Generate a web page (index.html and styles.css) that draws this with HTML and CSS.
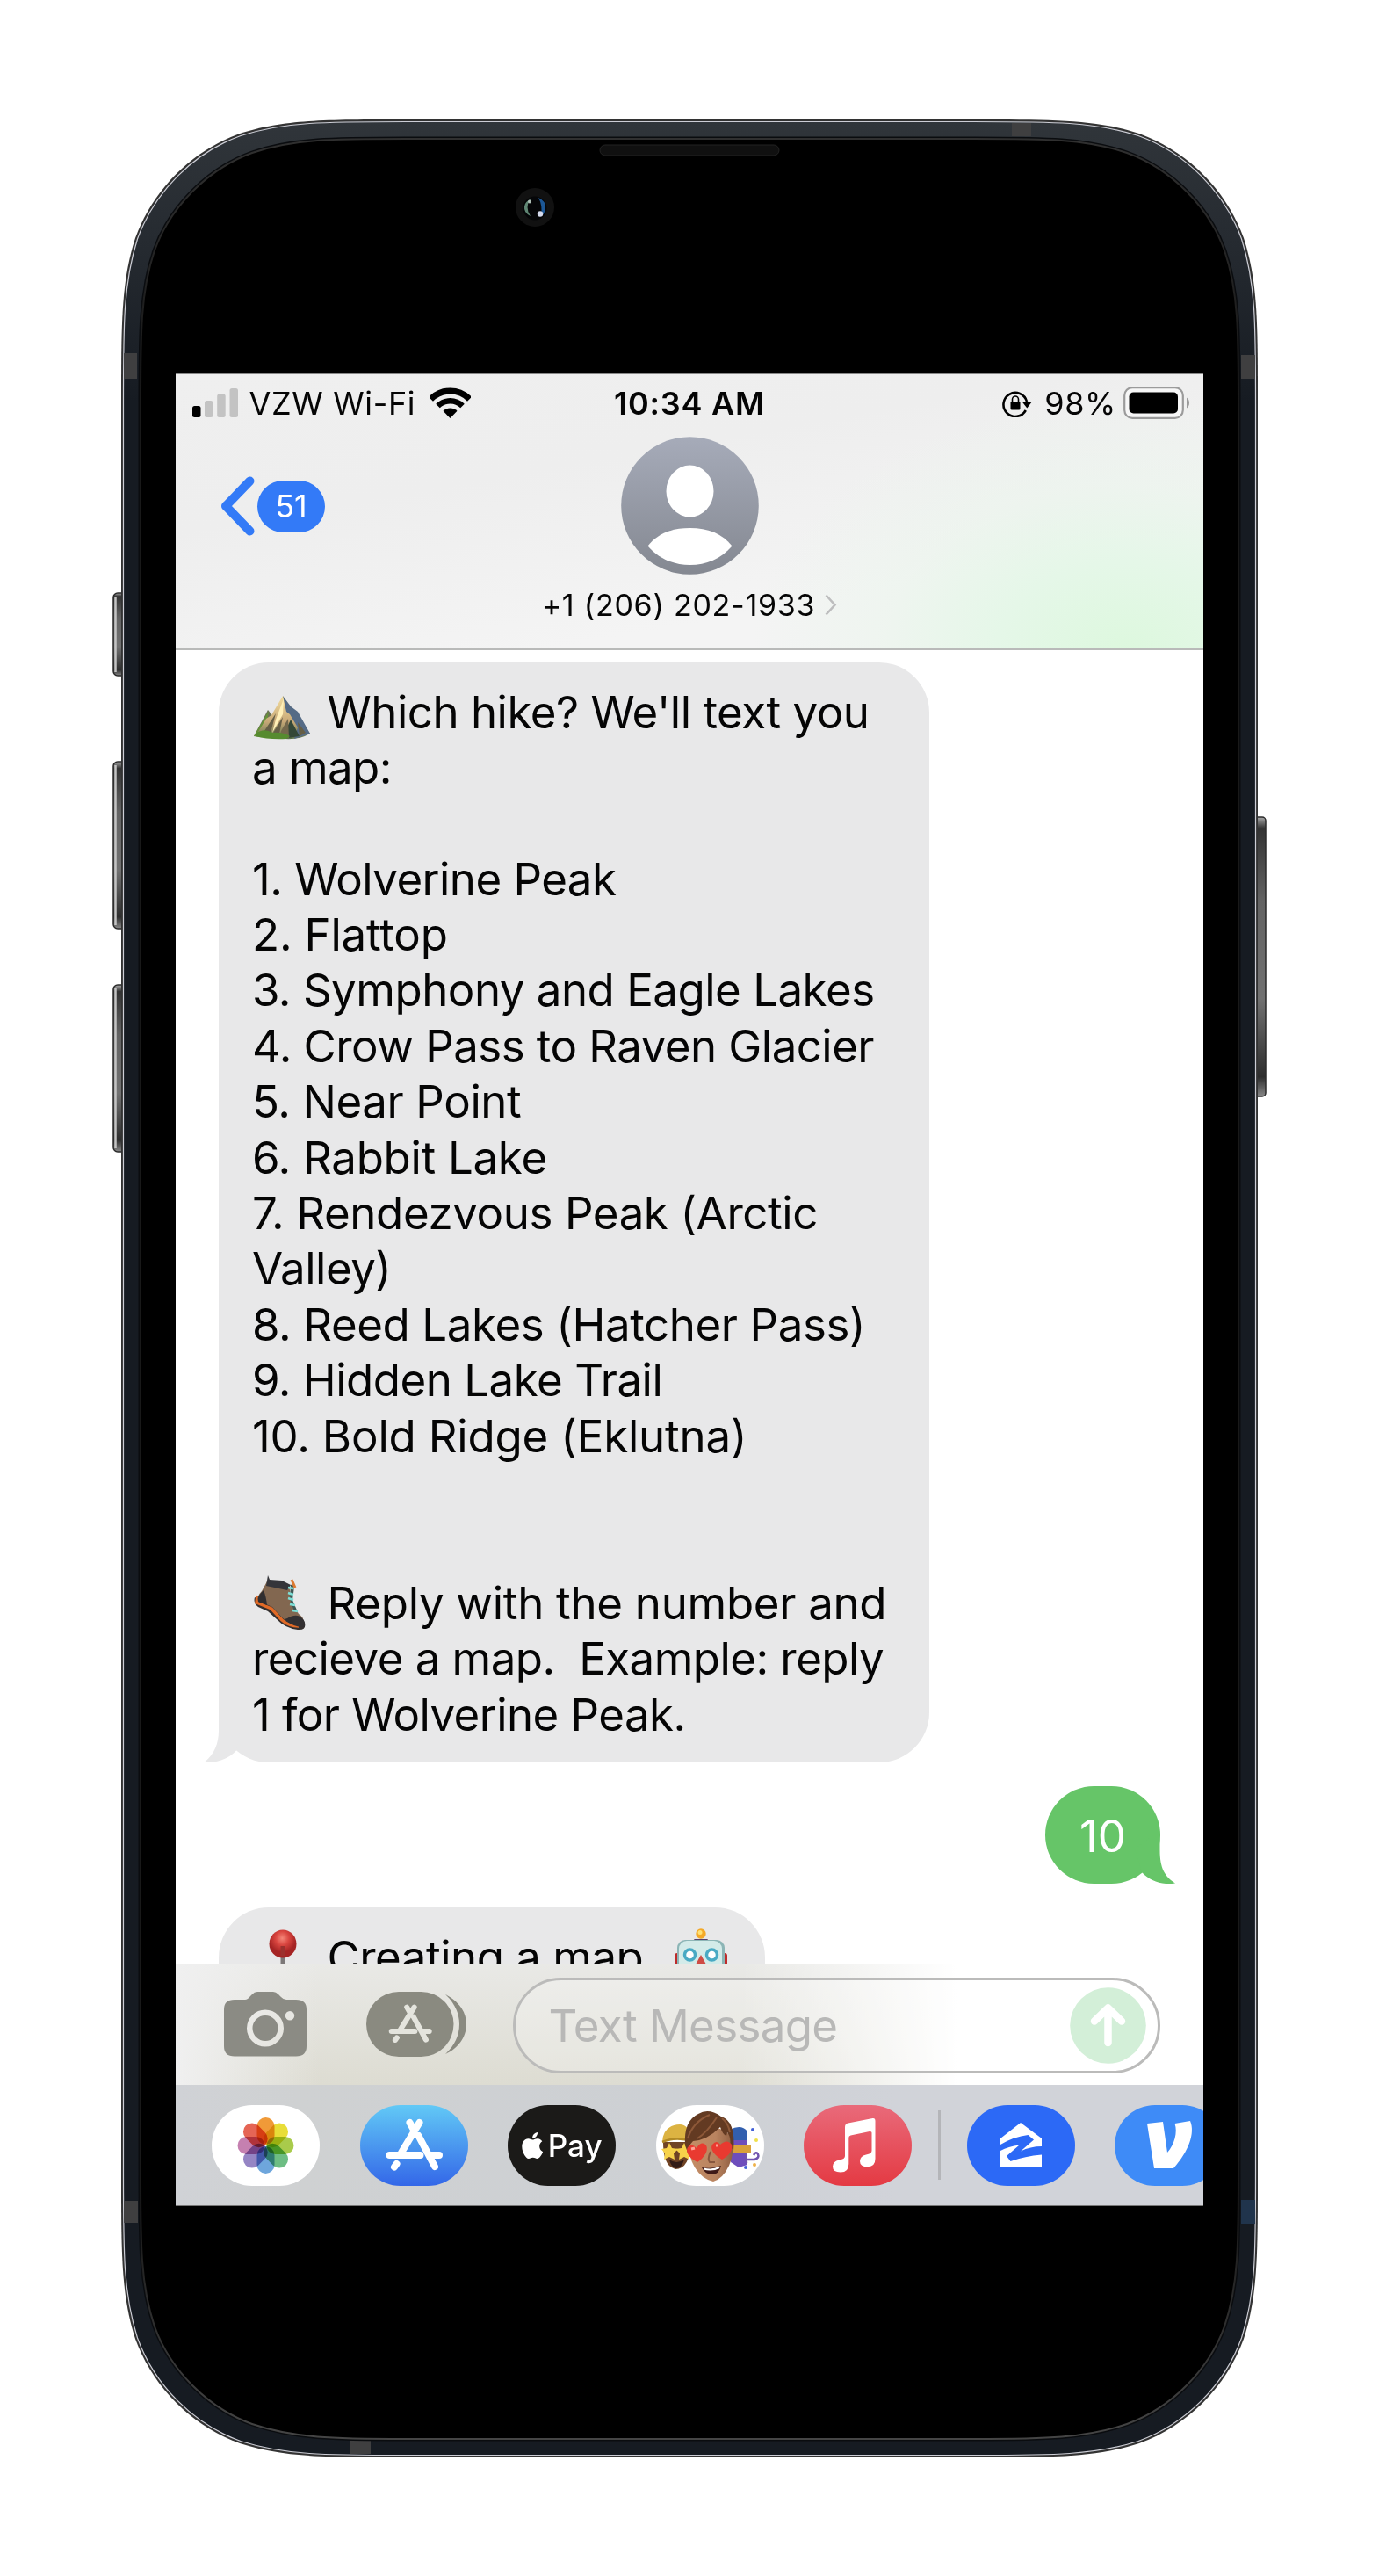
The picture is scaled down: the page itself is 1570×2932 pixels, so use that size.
FILE: index.html
```html
<!DOCTYPE html>
<html lang="en">
<head>
<meta charset="utf-8">
<title>Messages</title>
<link rel="stylesheet" href="styles.css">
</head>
<body>
<main class="device">
  <svg class="chassis" viewBox="0 0 1570 2932" aria-hidden="true">
    <defs>
      <linearGradient id="metal" x1="0" y1="0" x2="0" y2="1"><stop offset="0" stop-color="#30353a"/><stop offset=".05" stop-color="#262b31"/><stop offset=".12" stop-color="#161b22"/><stop offset="1" stop-color="#161b22"/></linearGradient>
      <linearGradient id="key" x1="0" y1="0" x2="0" y2="1"><stop offset="0" stop-color="#aaa"/><stop offset=".04" stop-color="#333"/><stop offset=".3" stop-color="#636363"/><stop offset=".65" stop-color="#717171"/><stop offset=".93" stop-color="#2d2d2d"/><stop offset="1" stop-color="#888"/></linearGradient>
      <linearGradient id="rim" x1="0" y1="0" x2="0" y2="1"><stop offset="0" stop-color="#303030"/><stop offset=".1" stop-color="#191919"/><stop offset=".9" stop-color="#191919"/><stop offset="1" stop-color="#454545"/></linearGradient>
    </defs>
    <g fill="url(#key)" stroke="#2b2b2b" stroke-width="1.5">
      <rect x="129" y="675" width="18" height="94" rx="5"/><rect x="129" y="867" width="18" height="190" rx="5"/><rect x="129" y="1121" width="18" height="190" rx="5"/><rect x="1424" y="930" width="17" height="318" rx="4"/>
    </g>
    <path d="M131.500 679v86M131.500 871v182M131.500 1125v182" stroke="#c4c4c4" stroke-width="2.500"/>
    <path fill="#333" d="M462 136H1108C1201 136 1247 136 1297 152C1352 172 1396 216 1416 271C1432 321 1432 367 1432 460V2473C1432 2566 1432 2612 1416 2662C1396 2717 1352 2761 1297 2781C1247 2797 1201 2797 1108 2797H462C369 2797 323 2797 273 2781C218 2761 174 2717 154 2662C138 2612 138 2566 138 2473V460C138 367 138 321 154 271C174 216 218 172 273 152C323 136 369 136 462 136Z"/>
    <path fill="url(#metal)" stroke="#cdced6" stroke-width="1.2" d="M462 138.500H1108C1200 138.500 1246 138.500 1296 154.500C1350 174 1394 218 1413.500 272C1429.500 322 1429.500 368 1429.500 460V2473C1429.500 2565 1429.500 2611 1413.500 2661C1394 2715 1350 2759 1296 2778.500C1246 2794.500 1200 2794.500 1108 2794.500H462C370 2794.500 324 2794.500 274 2778.500C220 2759 176 2715 156.500 2661C140.500 2611 140.500 2565 140.500 2473V460C140.500 368 140.500 322 156.500 272C176 218 220 174 274 154.500C324 138.500 370 138.500 462 138.500Z"/>
    <g fill="#3f3f40"><path d="M141 402h15v29h-15zM1413 404h16v27h-16zM1152 140h22v15h-22zM141 2505h16v25h-16zM398 2777h24v16h-24z"/><path fill="#20344c" d="M1413 2504h16v27h-16z"/></g>
    <path fill="#000" stroke="#0a0c0f" stroke-width="5" d="M462 158H1108C1190 158 1236 158 1283 174C1333 192 1376 235 1394 285C1410 332 1410 378 1410 460V2473C1410 2555 1410 2601 1394 2648C1376 2698 1333 2741 1283 2759C1236 2775 1190 2776 1108 2776H462C380 2776 334 2775 287 2759C237 2741 194 2698 176 2648C160 2601 160 2555 160 2473V460C160 378 160 332 176 285C194 235 237 192 287 174C334 158 380 158 462 158Z"/>
    <path fill="#000" stroke="url(#rim)" stroke-width="2" d="M462 158H1108C1190 158 1236 158 1283 174C1333 192 1376 235 1394 285C1410 332 1410 378 1410 460V2473C1410 2555 1410 2601 1394 2648C1376 2698 1333 2741 1283 2759C1236 2775 1190 2776 1108 2776H462C380 2776 334 2775 287 2759C237 2741 194 2698 176 2648C160 2601 160 2555 160 2473V460C160 378 160 332 176 285C194 235 237 192 287 174C334 158 380 158 462 158Z"/>
    <rect x="683" y="165" width="204" height="12" rx="6" fill="#101010" stroke="#222"/>
    <circle cx="609" cy="236" r="22" fill="#111"/><circle cx="609" cy="237" r="13.500" fill="#050608"/>
    <path d="M604 227q-7 9 0 19q-8-4-7-11q1-6 7-8z" fill="#5f8673"/><path d="M613 225q9 4 8 12q-1 7-5 9q2-12-3-21z" fill="#1c5796"/><circle cx="615" cy="243.500" r="3.200" fill="#d5dbee"/><circle cx="603" cy="229.500" r="2" fill="#aebfb6"/>
  </svg>

  <section class="screen">
    <header class="top">
      <div class="status">
        <div class="carrier">
          <svg width="52" height="33" viewBox="0 0 52 33"><g fill="#c3c3c3"><rect x="14" y="14" width="9.500" height="19" rx="2.500"/><rect x="28.200" y="6.500" width="9.500" height="26.500" rx="2.500"/><rect x="42.500" width="9.500" height="33" rx="2.500"/></g><rect y="20" width="9.500" height="13" rx="2.500"/></svg>
          <span class="net">VZW Wi-Fi</span>
          <svg width="47" height="35" viewBox="0 0 47 35"><g fill="none" stroke="#000"><path d="M1.500 13.200A31 31 0 0 1 45.500 13.200" stroke-width="7"/><path d="M9.500 21A20 20 0 0 1 37.500 21" stroke-width="6.500"/></g><path d="M23.500 35L15.500 26.800A11.500 11.500 0 0 1 31.500 26.800Z"/></svg>
        </div>
        <div class="clock">10:34 AM</div>
        <div class="power">
          <svg width="34" height="32" viewBox="0 0 34 32"><path d="M26.800 24A13.500 13.500 0 1 1 28 14" fill="none" stroke="#000" stroke-width="2.600"/><path d="M22.500 14H34L28.300 21.500Z"/><rect x="9.500" y="14" width="11" height="9.500" rx="1.500"/><path d="M11.500 15v-3.500a3.500 3.500 0 0 1 7 0V15" fill="none" stroke="#000" stroke-width="1.600"/></svg>
          <span class="pct">98%</span>
          <svg width="76" height="37" viewBox="0 0 76 37"><rect x="1.200" y="1.200" width="66.600" height="34.600" rx="9" fill="#f7f7f7" stroke="#9b9b9b" stroke-width="2.200"/><rect x="6.500" y="6.500" width="55.500" height="24" rx="5"/><path d="M72 12.500q3 2 3 6t-3 6z" fill="#9b9b9b"/></svg>
        </div>
      </div>
      <div class="contact-row">
        <div class="back">
          <svg width="39" height="68" viewBox="0 0 39 68"><path d="M33.500 5.500L6 34L33.500 62.500" fill="none" stroke="#337af7" stroke-width="10" stroke-linecap="round" stroke-linejoin="round"/></svg>
          <span class="badge">51</span>
        </div>
        <div class="contact">
          <svg width="157" height="157" viewBox="0 0 157 157"><defs><linearGradient id="av" x1="0" y1="0" x2="0" y2="1"><stop offset="0" stop-color="#a6abb9"/><stop offset="1" stop-color="#848891"/></linearGradient></defs><circle cx="78.500" cy="78.500" r="78.300" fill="url(#av)"/><ellipse cx="78.500" cy="62" rx="27" ry="29.500" fill="#fff"/><path d="M30.500 124.500C42 110 58 104 78.500 104S115 110 126.500 124.500C114 139 97 146 78.500 146S43 139 30.500 124.500Z" fill="#fff"/></svg>
          <div class="number"><span class="tel">+1 (206) 202-1933</span><svg width="14" height="25" viewBox="0 0 14 25"><path d="M1.500 1.500L11.500 12.500L1.500 23.500" fill="none" stroke="#bdbdbe" stroke-width="2.600"/></svg></div>
        </div>
      </div>
    </header>

    <div class="thread">
      <article class="bubble received hikes">
        <svg class="tail" width="44" height="58" viewBox="0 0 44 58"><path d="M16 0V22C16 36 11 49 0 57.500C14 59 27 54 36 44.500L44 0Z" fill="#e8e8e9"/></svg>
        <p class="t50"><svg class="emoji" width="65" height="50" viewBox="0 0 65 50"><defs><linearGradient id="rock" x1="0" y1="0" x2="0" y2="1"><stop offset="0" stop-color="#f5dfa0"/><stop offset=".6" stop-color="#c7a877"/><stop offset="1" stop-color="#59714a"/></linearGradient></defs><path d="M0 46L16 16L24 26L21 48Z" fill="#6d7257"/><path d="M0 46L17 17L12 47Z" fill="#66923a"/><path d="M2 46L14 26L20 22L33 0L42 12L55 30L64 43Q47 53 22 47Z" fill="url(#rock)"/><path d="M33 0L42 12L50 18L64 43L46 49L50 36L41 21L37 18Z" fill="#556b86"/><path d="M42 27L52 46L32 49Z" fill="#344737"/><path d="M19 47L33 24L28 48ZM8 46L25 20L18 46ZM50 30L59 42L52 46Z" fill="#655e46"/><path d="M34 3L25 27L21 42L33 21Z" fill="#fff0b8"/><path d="M40 48L39 26L31 40L29 48Z" fill="#74684c"/><path d="M2 43Q12 36 21 42Q33 41 41 46L37 49Q16 50 2 46Z" fill="#568b2f"/></svg>Which hike? We'll text you</p>
        <p class="t55">a map:</p>
        <p></p>
        <p class="t55">1. Wolverine Peak</p>
        <p class="t20">2. Flattop</p>
        <p class="t50">3. Symphony and Eagle Lakes</p>
        <p class="t55">4. Crow Pass to Raven Glacier</p>
        <p class="t40">5. Near Point</p>
        <p class="t30">6. Rabbit Lake</p>
        <p class="t40">7. Rendezvous Peak (Arctic</p>
        <p class="t50">Valley)</p>
        <p class="t40">8. Reed Lakes (Hatcher Pass)</p>
        <p class="t50">9. Hidden Lake Trail</p>
        <p class="t20">10. Bold Ridge (Eklutna)</p>
        <p></p>
        <p></p>
        <p class="t30"><svg class="emoji" width="65" height="64" viewBox="0 0 65 64"><path d="M1 26Q-1 33 5 37L16 42L26 51Q35 61 50 63Q60 64 58 55L55 49Z" fill="#35302f"/><path d="M4 24L3 32L20 39L32 52Q40 59 51 59" fill="none" stroke="#e06a27" stroke-width="3.500"/><path d="M15 8L39 11Q42 18 42 29L51 45Q58 49 56 57Q43 58 33 50L21 37L5 30Q3 25 9 19Z" fill="#826750"/><path d="M16 1L18 6L32 7L42 12L38 18L14 13Z" fill="#35353a"/><path d="M11 18Q3 25 5 31L15 35Q14 25 11 18Z" fill="#302e30"/><path d="M38 50Q48 44 54 49Q60 54 57 60Q44 60 35 51Z" fill="#333032"/><path d="M42 12Q46 10 45.500 18L44 29L50 43L46 42L41 28Z" fill="#3f5653"/><path d="M39 15l6 1M39 21l6 2M39 27l6 2M41 34l6 1M44 41l6 1" stroke="#7dded6" stroke-width="2.600"/><path d="M43 6l4 9" stroke="#dc7930" stroke-width="3"/></svg>Reply with the number and</p>
        <p class="t55">recieve a map.&nbsp; Example: reply</p>
        <p class="t55">1 for Wolverine Peak.</p>
      </article>

      <article class="bubble sent">
        <svg class="tail" width="46" height="60" viewBox="0 0 46 60"><path d="M28.500 0V22C28.500 42 34 52 46 59.500C32 62 17 57 8 47L0 20Z" fill="#66c568"/></svg>
        10
      </article>

      <article class="bubble received creating">
        <p class="t50"><svg class="emoji" width="65" height="64" viewBox="0 0 65 64"><defs><radialGradient id="pin" cx=".48" cy=".3"><stop offset="0" stop-color="#f58678"/><stop offset=".5" stop-color="#d9453f"/><stop offset="1" stop-color="#a52424"/></radialGradient></defs><path d="M33 28V62" stroke="#7c7878" stroke-width="5"/><ellipse cx="33" cy="17.500" rx="15.500" ry="16" fill="url(#pin)"/><path d="M33 20v11" stroke="#9c302d" stroke-width="5"/></svg>Creating a map<svg class="emoji robot" width="60" height="64" viewBox="0 0 60 64"><rect x="0" y="28" width="8" height="22" rx="3" fill="#bd2b2b"/><rect x="52" y="28" width="8" height="22" rx="3" fill="#bd2b2b"/><path d="M22 12h16l-3 5H25z" fill="#57406c"/><circle cx="30" cy="6" r="5.700" fill="#f4a928"/><circle cx="29" cy="4.500" r="2.500" fill="#ffe175"/><rect x="3" y="13" width="54" height="48" rx="9" fill="#8cb5b6"/><rect x="5" y="14" width="49" height="40" rx="9" fill="#d3ebe9"/><g fill="#fff" stroke="#49aac4" stroke-width="3.500"><circle cx="17.500" cy="30" r="6"/><circle cx="42.500" cy="30" r="6"/></g><path d="M30 30l6 11H24z" fill="#cf4b45"/><rect x="14" y="46" width="32" height="9" fill="#355"/></svg></p>
      </article>
    </div>

    <div class="composer">
      <svg class="camera" width="94" height="74" viewBox="0 0 94 74"><path fill="#8b8b84" fill-rule="evenodd" d="M12 9H24Q27 9 30 5L32 3Q34.500 0 38 0H56Q59 0 62 3L65 6Q67.500 9 71 9H82Q94 9 94 20V62Q94 73.500 82 73.500H12Q0 73.500 0 62V20Q0 9 12 9ZM47 20.500A21 21 0 1 0 47 62.500A21 21 0 1 0 47 20.500ZM47 27A14.500 14.500 0 1 1 47 56A14.500 14.500 0 1 1 47 27ZM75 22A5.200 5.200 0 1 0 75 32.400A5.200 5.200 0 1 0 75 22Z"/></svg>
      <svg class="apps" width="116" height="74" viewBox="0 0 116 74"><rect width="99.500" height="74" rx="37" fill="#8a8a80"/><path d="M90 3C104 10 114 22 114 37S104 65 90 71C100 62 106 50 106 37S100 12 90 3Z" fill="#8a8a80"/><g transform="translate(3.300 2.800) scale(.76 .74)" fill="none" stroke="#e4e4dd" stroke-width="8" stroke-linecap="round"><path d="M56.500 20L61 28M67.500 20L47 54M66.500 35L85 70M33.500 57H68.500M80 57H90M41.500 67L39 70.500"/></g></svg>
      <div class="field"><span class="ph">Text Message</span>
        <svg class="send" width="87" height="87" viewBox="0 0 87 87"><circle cx="43.500" cy="43.500" r="43.300" fill="#d3efd8"/><path d="M43.500 63V26M28 38.500L43.500 23.500L59 38.500" fill="none" stroke="#fff" stroke-width="8.500" stroke-linecap="round" stroke-linejoin="round"/></svg>
      </div>
    </div>

    <nav class="drawer">
      <svg class="app" viewBox="0 0 123 92"><rect width="123" height="92" rx="46" fill="#fff"/><g class="petals"><rect x="51.500" y="14" width="20" height="31" rx="10" fill="#f09a38"/><rect x="51.500" y="14" width="20" height="31" rx="10" fill="#e8dd38" transform="rotate(45 61.500 46)"/><rect x="51.500" y="14" width="20" height="31" rx="10" fill="#a9cb4b" transform="rotate(90 61.500 46)"/><rect x="51.500" y="14" width="20" height="31" rx="10" fill="#6dbd83" transform="rotate(135 61.500 46)"/><rect x="51.500" y="14" width="20" height="31" rx="10" fill="#6ea6dc" transform="rotate(180 61.500 46)"/><rect x="51.500" y="14" width="20" height="31" rx="10" fill="#9585c4" transform="rotate(225 61.500 46)"/><rect x="51.500" y="14" width="20" height="31" rx="10" fill="#c580b0" transform="rotate(270 61.500 46)"/><rect x="51.500" y="14" width="20" height="31" rx="10" fill="#e56555" transform="rotate(315 61.500 46)"/></g></svg>
      <svg class="app" viewBox="0 0 123 92"><defs><linearGradient id="as" x1="0" y1="0" x2="0" y2="1"><stop offset="0" stop-color="#62c9f6"/><stop offset="1" stop-color="#3467e8"/></linearGradient></defs><rect width="123" height="92" rx="46" fill="url(#as)"/><path d="M56.500 20L61 28M67.500 20L47 54M66.500 35L85 70M33.500 57H68.500M80 57H90M41.500 67L39 70.500" fill="none" stroke="#fff" stroke-width="8" stroke-linecap="round"/></svg>
      <div class="app pay"><svg width="25" height="30" viewBox="2 0 20.500 24" preserveAspectRatio="none"><path fill="#fff" d="M12.152 6.896c-.948 0-2.415-1.078-3.960-1.040-2.040.027-3.910 1.183-4.961 3.014-2.117 3.675-.546 9.103 1.519 12.090 1.013 1.454 2.208 3.090 3.792 3.039 1.520-.065 2.090-.987 3.935-.987 1.831 0 2.350.987 3.960.948 1.637-.026 2.676-1.480 3.676-2.948 1.156-1.688 1.636-3.325 1.662-3.415-.039-.013-3.182-1.221-3.220-4.857-.026-3.040 2.480-4.494 2.597-4.559-1.429-2.090-3.623-2.324-4.390-2.376-2-.156-3.675 1.090-4.610 1.090zM15.530 3.830c.843-1.012 1.400-2.427 1.245-3.830-1.207.052-2.662.805-3.532 1.818-.780.896-1.454 2.338-1.273 3.714 1.338.104 2.715-.688 3.559-1.701"/></svg><span>Pay</span></div>
      <svg class="app" viewBox="0 0 123 92"><defs><linearGradient id="skin" x1="0" y1="0" x2="1" y2="0"><stop offset="0" stop-color="#c48d66"/><stop offset=".6" stop-color="#b98460"/><stop offset="1" stop-color="#8e5d40"/></linearGradient></defs><rect width="123" height="92" rx="46" fill="#fff"/>
        <path d="M8 42Q8 70 22 73Q38 73 40 42Z" fill="#704425"/><path d="M7 42Q8 23 27 22Q38 22 42 42Q24 36 7 42Z" fill="#dcb342"/><path d="M7 42Q24 35 42 42" fill="none" stroke="#b28a25" stroke-width="2.500"/><path d="M15 43l3 6 7 1-5 5 1 7-6-3-6 3 1-7-4-5 6-1zM32 43l3 6 6 1-4 5 1 7-6-3-6 3 1-7-5-5 7-1z" fill="#f7d24a"/><path d="M15 62Q23 68 32 62Q29 72 23 72Q17 71 15 62Z" fill="#331c16"/>
        <path d="M84 28q13-7 20 2v11H84z" fill="#325fae"/><path d="M85 40h19v28l-10 3-9-6z" fill="#6e4ebc"/><path d="M88 46h20v8H88z" fill="#d9a03a"/><path d="M100 62h12q6-2 4-6t-5 1M102 54l1 12" fill="none" stroke="#7153af" stroke-width="2.500"/><circle cx="110" cy="28" r="2" fill="#415fd8"/><circle cx="114" cy="40" r="2" fill="#efe04a"/><circle cx="102" cy="71" r="2" fill="#415fd8"/><circle cx="112" cy="68" r="2" fill="#efb24a"/>
        <path d="M37 38Q36 58 44 71Q52 84 65 87Q76 84 83 69Q89 55 88 38Q64 12 37 38Z" fill="url(#skin)"/><path d="M33 46Q31 18 48 10Q60 3 74 13Q91 18 88 52L84 46Q86 38 81 31L80 35Q76 34 73 25Q58 40 42 41Q37 46 36 54Z" fill="#633a22"/><path d="M36 38Q42 19 61 11M47 38Q58 31 69 14M84 31Q82 20 75 15" fill="none" stroke="#8d5838" stroke-width="2"/><g fill="#e93a30"><path d="M47 65C37 60 33 53 36 48Q41 43 46 49Q52 40 57 46C60 51 55 60 47 65ZM75 62C66 57 61 50 64 45Q69 39 73 45Q81 38 86 45C88 51 83 58 75 62Z"/></g><path d="M40 50l4-1M68 46l3 0" stroke="#ffa194" stroke-width="3"/><path d="M62 53q-4 9-1 12h6" fill="none" stroke="#87573e" stroke-width="2"/><path d="M52 71Q65 73 74 69Q72 79 63 79Q55 78 52 71Z" fill="#3f1a17"/><path d="M54 72.500Q64 75 72 71" fill="none" stroke="#fff" stroke-width="2"/></svg>
      <svg class="app" viewBox="0 0 123 92"><defs><linearGradient id="mu" x1="0" y1="0" x2="0" y2="1"><stop offset="0" stop-color="#e96a7a"/><stop offset="1" stop-color="#e43a43"/></linearGradient></defs><rect width="123" height="92" rx="46" fill="url(#mu)"/><path d="M47 25Q47 21 50.500 20.500L78.500 15Q81.500 14.500 81.500 18V61Q81.500 70 73 70.300Q64 70.300 64 64Q64 58 71 56.500Q77.500 55.500 77.500 52V31.500Q77.500 29.500 75 30L53.500 34.500Q51.300 35 51.300 37V67Q51.300 76.500 42 76.500Q33 76.500 33 70Q33 64 40.500 62.500Q47 61.500 47 58Z" fill="#fff"/></svg>
      <i class="rule"></i>
      <svg class="app" viewBox="0 0 123 92"><rect width="123" height="92" rx="46" fill="#2c69f6"/><path d="M61 20L85 38V47Q72 47 61 52.500L76 39.500L69.500 34Q53 36 38 45V38ZM38 52Q47 47 59.500 45.500L45 58L49.500 64Q66 58 85 56.500V71H38Z" fill="#fff"/></svg>
      <svg class="app" viewBox="0 0 123 92"><rect width="123" height="92" rx="46" fill="#3e8bf7"/><path d="M37 21L55 19L60 54C68 45 72 31 68.500 21L86 18C92 32 84 53 67 72H45Z" fill="#fff"/></svg>
    </nav>
  </section>
</main>
</body>
</html>
```

FILE: styles.css
```css
* { box-sizing: border-box; }
body { margin: 0; background: #fff; color: #050505; font-family: Inter, "Liberation Sans", sans-serif; }
svg { display: block; flex: none; }
p { margin: 0; }

.device { position: relative; width: 1570px; height: 2932px; padding: 425px 200px 421px; }
.chassis { position: absolute; inset: 0; width: 1570px; height: 2932px; }
.screen { position: relative; display: flex; flex-direction: column; width: 1170px; height: 2086px; overflow: hidden; background: #fff; }

.top {
  height: 315px;
  flex: none;
  border-bottom: 2px solid #b9bab9;
  border-top: 1px solid #888;
  background:
    radial-gradient(ellipse 430px 290px at 1085px 315px, rgba(221, 248, 222, 1), rgba(224, 248, 228, .75) 35%, rgba(232, 246, 234, .45) 65%, rgba(243, 243, 243, 0)),
    linear-gradient(170deg, #efefef, #eeeeee 35%, #f4f4f4 75%);
}
.status { display: grid; grid-template-columns: 1fr auto 1fr; align-items: center; height: 65px; padding: 0 15px 0 19px; font-size: 36px; line-height: 64px; }
.carrier, .power { display: flex; align-items: center; }
.power { justify-content: flex-end; }
.net { margin: 0 16px 0 12.5px; letter-spacing: .65px; }
.clock { margin: 0 4px 0 0; font-weight: 600; letter-spacing: .8px; }
.pct { margin: 0 8px 0 14px; letter-spacing: .6px; }

.contact-row { display: grid; grid-template-columns: 1fr auto 1fr; }
.back { display: flex; align-items: center; gap: 3px; height: 70px; margin: 50px 0 0 51px; }
.badge { width: 77px; height: 59px; border-radius: 30px; background: #337af7; color: #fff; font-size: 36px; line-height: 59px; text-align: center; }
.contact { display: flex; flex-direction: column; align-items: center; padding-top: 6px; }
.contact > svg { width: 157px; }
.number { display: flex; align-items: center; gap: 11px; height: 45px; margin-top: 12px; font-size: 34px; line-height: 45px; }
.tel { letter-spacing: .75px; }

.thread { display: flex; flex: none; flex-direction: column; align-items: flex-start; height: 1495px; padding: 14px 49px 0; overflow: hidden; }
.bubble { position: relative; flex: none; border-radius: 57px; font-size: 51px; line-height: 63.4px; white-space: nowrap; }
.bubble p { height: 63.4px; }
.received { background: #e8e8e9; padding: 24.500px 38px 22px; }
.hikes { width: 809px; height: 1252px; }

/* Tracking steps for individual lines */
.t20 { letter-spacing: -.2px; }
.t30 { letter-spacing: -.3px; }
.t40 { letter-spacing: -.4px; }
.t50 { letter-spacing: -.5px; }
.t55 { letter-spacing: -.55px; }

.emoji { display: inline-block; margin: -14px 19px 0 1.5px; vertical-align: -13px; }
.tail { position: absolute; }
.received .tail { left: -16px; bottom: 0; }
.sent { align-self: flex-end; width: 131px; height: 111px; margin-top: 27px; border-radius: 56px; background: #66c568; color: #fff; line-height: 114px; text-align: center; }
.sent .tail { right: -17px; bottom: 0; }
.creating { width: 622px; height: 120px; margin-top: 27px; }
.robot { margin-left: 36px; }

.composer {
  display: flex; flex: none; align-items: center; height: 138px; padding-left: 55px;
  background:
    linear-gradient(90deg, rgba(240, 240, 240, 1), rgba(240, 240, 240, 0) 14%, rgba(255, 255, 255, 0) 55%, #fff 76%),
    linear-gradient(180deg, #e9e9e6, #dddcd2);
}
.apps { margin-left: 68px; }
.field { display: flex; flex: none; justify-content: space-between; align-items: center; width: 737px; height: 109px; margin: 2px 0 0 51px; padding: 0 13px 0 37.5px; border: 3px solid #bbbbba; border-radius: 55px; background: rgba(255, 255, 255, .25); color: #b8b8b7; font-size: 51px; letter-spacing: -.65px; }

.drawer { display: flex; flex: none; align-items: flex-start; gap: 45.6px; height: 138px; padding: 23px 0 0 41px; border-bottom: 1px solid #777; background: linear-gradient(90deg, #d0d2d6, #cfd1d2 12%, #cdd0d4 50%, #d1d3d9 70%); }
.app { width: 123px; height: 92px; flex: none; }
.petals rect { mix-blend-mode: multiply; }
.pay { display: flex; align-items: center; justify-content: center; gap: 5px; border-radius: 46px; background: #1b1a18; color: #fff; font-size: 35px; font-weight: 500; line-height: 40px; }
.rule { flex: none; width: 3px; height: 79px; margin: 6px -16px 0 -16px; background: #b4b5b9; }
```
